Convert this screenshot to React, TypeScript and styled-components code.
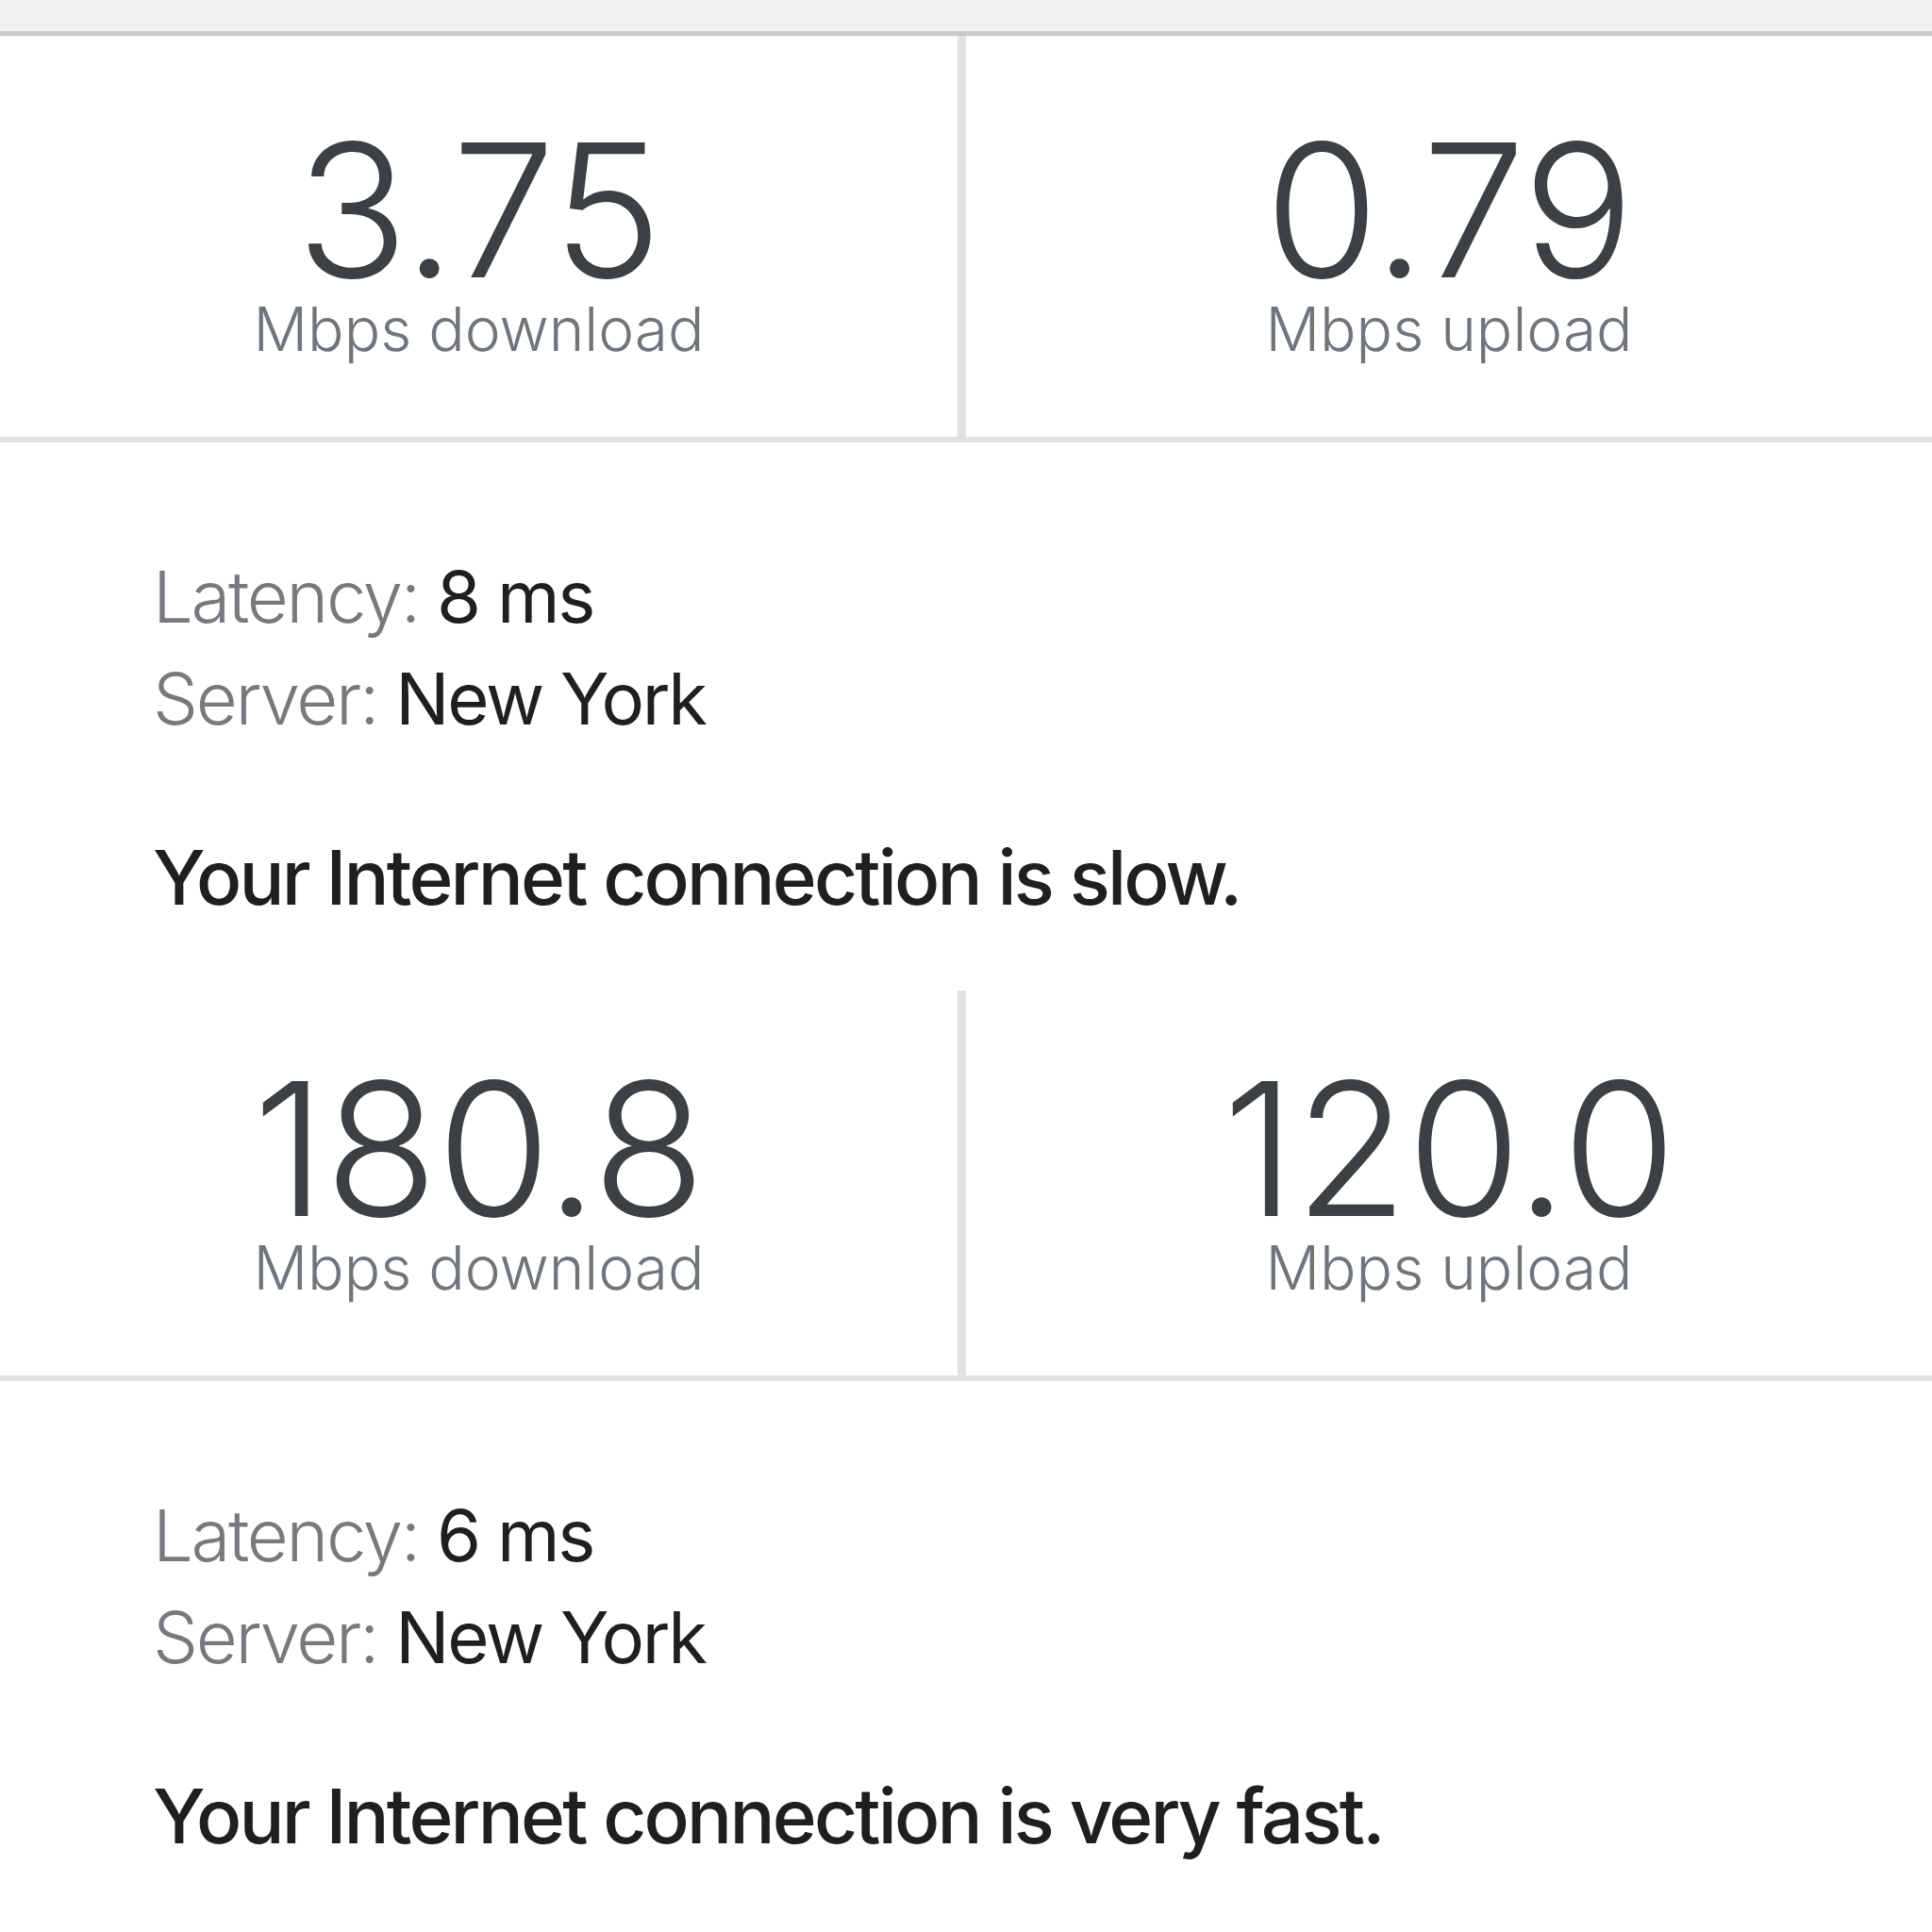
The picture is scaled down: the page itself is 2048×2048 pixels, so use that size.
import React from 'react'
import styled, { createGlobalStyle } from 'styled-components'

const GlobalStyle = createGlobalStyle`
  html, body {
    margin: 0;
    padding: 0;
    background: #ffffff;
  }
  body {
    font-family: Inter, 'Liberation Sans', Arial, sans-serif;
    -webkit-font-smoothing: antialiased;
  }
`

const LINE = '#e1e1e1'

const TopBar = styled.div`
  height: 33px;
  background: #f1f2f4;
  border-bottom: 5px solid #c8c9cb;
  box-shadow: 0 2px 4px rgba(0, 0, 0, 0.05);
`

const Speeds = styled.div`
  display: grid;
  grid-template-columns: 1fr 1fr;
  border-bottom: 6px solid ${LINE};
`

const SpeedCell = styled.div<{ $top: number; $divider?: boolean }>`
  display: flex;
  flex-direction: column;
  align-items: center;
  padding: ${(p) => p.$top}px 0 82px;
  border-right: ${(p) => (p.$divider ? `9px solid ${LINE}` : 'none')};
`

const Number = styled.div`
  font-size: 196px;
  font-weight: 300;
  line-height: 188px;
  color: #3c4043;
  letter-spacing: -1px;
`

const Unit = styled.div`
  font-size: 64px;
  font-weight: 300;
  line-height: 1;
  color: #70757a;
`

const Info = styled.div`
  padding: 109px 0 80px 162px;
`

const Row = styled.div`
  font-size: 76px;
  line-height: 108px;
  letter-spacing: -0.03em;
  color: #1f1f1f;
`

const Key = styled.span`
  font-weight: 300;
  color: #77797d;
`

const Status = styled.div`
  margin-top: 96px;
  font-size: 80px;
  font-weight: 500;
  line-height: 1;
  letter-spacing: -0.035em;
  color: #1f1f1f;
`

type Result = {
  down: string
  up: string
  latency: string
  server: string
  verdict: string
  top: number
}

const results: Result[] = [
  { down: '3.75', up: '0.79', latency: '8 ms', server: 'New York', verdict: 'slow', top: 91 },
  { down: '180.8', up: '120.0', latency: '6 ms', server: 'New York', verdict: 'very fast', top: 74 }
]

function SpeedResult({ r }: { r: Result }) {
  return (
    <section>
      <Speeds>
        <SpeedCell $top={r.top} $divider>
          <Number>{r.down}</Number>
          <Unit>Mbps download</Unit>
        </SpeedCell>
        <SpeedCell $top={r.top}>
          <Number>{r.up}</Number>
          <Unit>Mbps upload</Unit>
        </SpeedCell>
      </Speeds>
      <Info>
        <Row>
          <Key>Latency:</Key> {r.latency}
        </Row>
        <Row>
          <Key>Server:</Key> {r.server}
        </Row>
        <Status>Your Internet connection is {r.verdict}.</Status>
      </Info>
    </section>
  )
}

export default function App() {
  return (
    <>
      <GlobalStyle />
      <TopBar />
      {results.map((r) => (
        <SpeedResult key={r.down} r={r} />
      ))}
    </>
  )
}
